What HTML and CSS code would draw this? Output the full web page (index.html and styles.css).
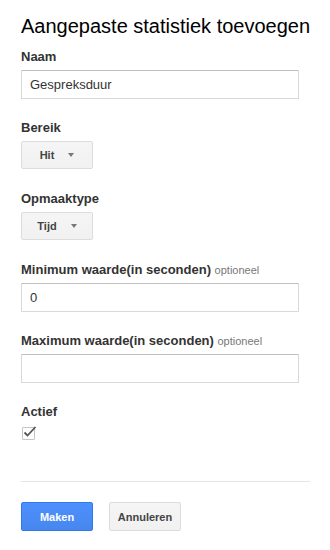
FILE: index.html
```html
<!DOCTYPE html>
<html lang="nl">
<head>
    <meta charset="UTF-8">
    <meta name="viewport" content="width=device-width, initial-scale=1.0">
    <title>Aangepaste statistiek toevoegen</title>
    <link rel="stylesheet" href="styles.css">
</head>
<body>
    <div class="panel">
        <h1 class="title">Aangepaste statistiek toevoegen</h1>

        <div class="field">
            <label class="label" for="naam">Naam</label>
            <input class="text-input" type="text" id="naam" value="Gespreksduur">
        </div>

        <div class="field field-select">
            <span class="label">Bereik</span>
            <button class="dropdown">Hit <span class="arrow"></span></button>
        </div>

        <div class="field field-select">
            <span class="label">Opmaaktype</span>
            <button class="dropdown">Tijd <span class="arrow"></span></button>
        </div>

        <div class="field">
            <label class="label" for="min">Minimum waarde(in seconden) <span class="optional">optioneel</span></label>
            <input class="text-input" type="text" id="min" value="0">
        </div>

        <div class="field">
            <label class="label" for="max">Maximum waarde(in seconden) <span class="optional">optioneel</span></label>
            <input class="text-input" type="text" id="max" value="">
        </div>

        <div class="field">
            <span class="label">Actief</span>
            <span class="checkbox">
                <svg width="15" height="15" viewBox="0 0 15 15">
                    <path d="M2.5 7.5 L5.5 10.5 L13.5 2" fill="none" stroke="#555" stroke-width="1.8"/>
                </svg>
            </span>
        </div>

        <!-- Footer buttons -->
        <div class="actions">
            <button class="button button-primary">Maken</button>
            <button class="button">Annuleren</button>
        </div>
    </div>
</body>
</html>
```

FILE: styles.css
```css
body {
    margin: 0;
    font-family: Arial, "Liberation Sans", sans-serif;
    color: #333;
    background: #fff;
}
.panel {
    padding: 14px 20px 0 21px;
}
.title {
    margin: 0 0 11px 0;
    font-size: 20px;
    line-height: 24px;
    font-weight: normal;
    color: #000;
    white-space: nowrap;
}
.field {
    margin-bottom: 21px;
}
.field-select {
    margin-bottom: 22px;
}
.label {
    display: block;
    font-size: 13px;
    line-height: 16px;
    font-weight: bold;
    color: #333;
    margin-bottom: 5px;
}
.optional {
    font-size: 11px;
    font-weight: normal;
    color: #777;
}
.text-input {
    display: block;
    box-sizing: border-box;
    width: 278px;
    height: 29px;
    margin: 0;
    padding: 0 8px;
    border: 1px solid #d9d9d9;
    border-top-color: #c0c0c0;
    border-radius: 1px;
    font-family: Arial, "Liberation Sans", sans-serif;
    font-size: 13px;
    color: #333;
    outline: none;
}
.dropdown {
    display: flex;
    align-items: center;
    justify-content: center;
    gap: 14px;
    box-sizing: border-box;
    width: 72px;
    height: 28px;
    padding: 0;
    border: 1px solid #dcdcdc;
    border-radius: 2px;
    background: linear-gradient(#f5f5f5, #f1f1f1);
    font-family: Arial, "Liberation Sans", sans-serif;
    font-size: 11px;
    font-weight: bold;
    color: #444;
}
.arrow {
    width: 0;
    height: 0;
    border-left: 3.5px solid transparent;
    border-right: 3.5px solid transparent;
    border-top: 4px solid #777;
}
.checkbox {
    display: block;
    position: relative;
    box-sizing: border-box;
    width: 13px;
    height: 13px;
    margin: 7px 0 0 1px;
    border: 1px solid #c6c6c6;
    border-radius: 1px;
}
.checkbox svg {
    position: absolute;
    left: -1px;
    top: -3px;
}
.actions {
    display: flex;
    gap: 16px;
    margin-top: 41px;
    padding-top: 20px;
    border-top: 1px solid #e5e5e5;
}
.button {
    box-sizing: border-box;
    width: 72px;
    height: 29px;
    padding: 0;
    border: 1px solid #dcdcdc;
    border-radius: 2px;
    background: linear-gradient(#f5f5f5, #f1f1f1);
    font-family: Arial, "Liberation Sans", sans-serif;
    font-size: 11px;
    font-weight: bold;
    color: #444;
}
.button-primary {
    background: linear-gradient(#4d90fe, #4787ed);
    border-color: #3079ed;
    color: #fff;
}
```
